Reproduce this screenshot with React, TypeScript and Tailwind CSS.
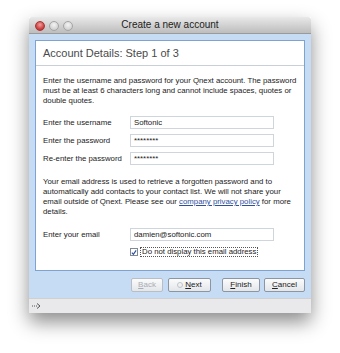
import React from "react";

const font = { fontFamily: '"Liberation Sans", Arial, sans-serif' };

function Field({ label, value }: { label: string; value: string }) {
  return (
    <div className="flex items-center h-[13px]">
      <div className="w-[87px] text-[7.8px] leading-[10px] text-[#222]">{label}</div>
      <div className="w-[144px] h-[13px] border border-[#cfd5dc] bg-white flex items-center pl-[3px] text-[7.8px] text-[#222]">
        {value}
      </div>
    </div>
  );
}

function Btn({ children, w, disabled }: { children: React.ReactNode; w: string; disabled?: boolean }) {
  return (
    <div
      className={`${w} h-[14px] rounded-[2px] border ${disabled ? "border-[#b9bec4] text-[#a8adb3]" : "border-[#8c96a2] text-[#222]"} bg-gradient-to-b from-[#fbfbfb] to-[#e3e6ea] flex items-center justify-center text-[8px]`}
    >
      {children}
    </div>
  );
}

export default function App() {
  return (
    <div className="w-[340px] h-[353px] bg-white pt-[17px] pl-[29px]" style={font}>
      <div className="w-[282px] shadow-[0_9px_18px_rgba(0,0,0,0.45)]">
        {/* title bar */}
        <div className="relative h-[17px] bg-gradient-to-b from-[#e9e9e9] to-[#bdbdbd] border-b border-[#9a9a9a] rounded-t-[3px] flex items-center justify-center">
          <div className="absolute left-[6px] top-[4px] flex gap-[4px]">
            <div className="w-[10px] h-[10px] rounded-full border border-[#a33] bg-[radial-gradient(circle_at_50%_35%,#f2a0a0,#cf4444_60%,#a82828)]" />
            <div className="w-[10px] h-[10px] rounded-full border border-[#a5a5a5] bg-[radial-gradient(circle_at_50%_35%,#f4f4f4,#d2d2d2_70%,#bdbdbd)]" />
            <div className="w-[10px] h-[10px] rounded-full border border-[#a5a5a5] bg-[radial-gradient(circle_at_50%_35%,#f4f4f4,#d2d2d2_70%,#bdbdbd)]" />
          </div>
          <span className="text-[10px] text-[#222] leading-none">Create a new account</span>
        </div>
        {/* body */}
        <div className="bg-[#c6dcf5] px-[6px] pt-[6px] pb-[6px]">
          <div className="h-[231px] bg-white border border-[#7ea3d0] flex flex-col">
            <div className="h-[25px] border-b border-[#c9cfd6] flex items-center pl-[7px] text-[11px] text-[#4a4a4a]">
              Account Details: Step 1 of 3
            </div>
            <div className="pl-[7px] pr-[2px] pt-[10px] text-[7.8px] leading-[10px] text-[#222] flex flex-col">
              <p>
                Enter the username and password for your Qnext account. The password must be at least 6 characters long and cannot include spaces, quotes or double quotes.
              </p>
              <div className="mt-[10px] flex flex-col gap-[5px]">
                <Field label="Enter the username" value="Softonic" />
                <Field label="Enter the password" value="********" />
                <Field label="Re-enter the password" value="********" />
              </div>
              <p className="mt-[12px] pr-[6px]">
                Your email address is used to retrieve a forgotten password and to automatically add contacts to your contact list. We will not share your email outside of Qnext. Please see our{" "}
                <span className="text-[#2f4f9e] underline">company privacy policy</span> for more details.
              </p>
              <div className="mt-[11px]">
                <Field label="Enter your email" value="damien@softonic.com" />
              </div>
              <div className="mt-[6px] ml-[87px] flex items-center gap-[2px]">
                <div className="w-[8px] h-[8px] border border-[#7f8a96] bg-white flex items-center justify-center">
                  <svg width="7" height="7" viewBox="0 0 7 7">
                    <path d="M1 3.6 L2.8 5.6 L6 1" stroke="#2a4c9c" strokeWidth="1.3" fill="none" />
                  </svg>
                </div>
                <div className="h-[10px] px-[1px] border border-dotted border-[#555] flex items-center text-[7.8px] text-[#222]">
                  Do not display this email address
                </div>
              </div>
            </div>
          </div>
          <div className="mt-[7px] flex justify-end h-[14px]">
            <Btn w="w-[32px]" disabled>
              <span><u>B</u>ack</span>
            </Btn>
            <div className="ml-[5px]">
              <Btn w="w-[43px]">
                <span className="flex items-center gap-[2px]">
                  <span className="w-[6px] h-[6px] rounded-full border border-[#c0c4c8]" />
                  <span><u>N</u>ext</span>
                </span>
              </Btn>
            </div>
            <div className="ml-[11px]">
              <Btn w="w-[38px]">
                <span><u>F</u>inish</span>
              </Btn>
            </div>
            <div className="ml-[4px]">
              <Btn w="w-[41px]">
                <span><u>C</u>ancel</span>
              </Btn>
            </div>
          </div>
        </div>
        {/* status bar */}
        <div className="h-[15px] bg-[#e9e9eb] border-t border-[#d0d0d0] flex items-center pl-[3px]">
          <svg width="9" height="6" viewBox="0 0 9 6">
            <path d="M0 3 H6" stroke="#555" strokeWidth="1" strokeDasharray="1 1" />
            <path d="M5 0.5 L8 3 L5 5.5" stroke="#555" strokeWidth="1" fill="none" />
          </svg>
        </div>
      </div>
    </div>
  );
}
